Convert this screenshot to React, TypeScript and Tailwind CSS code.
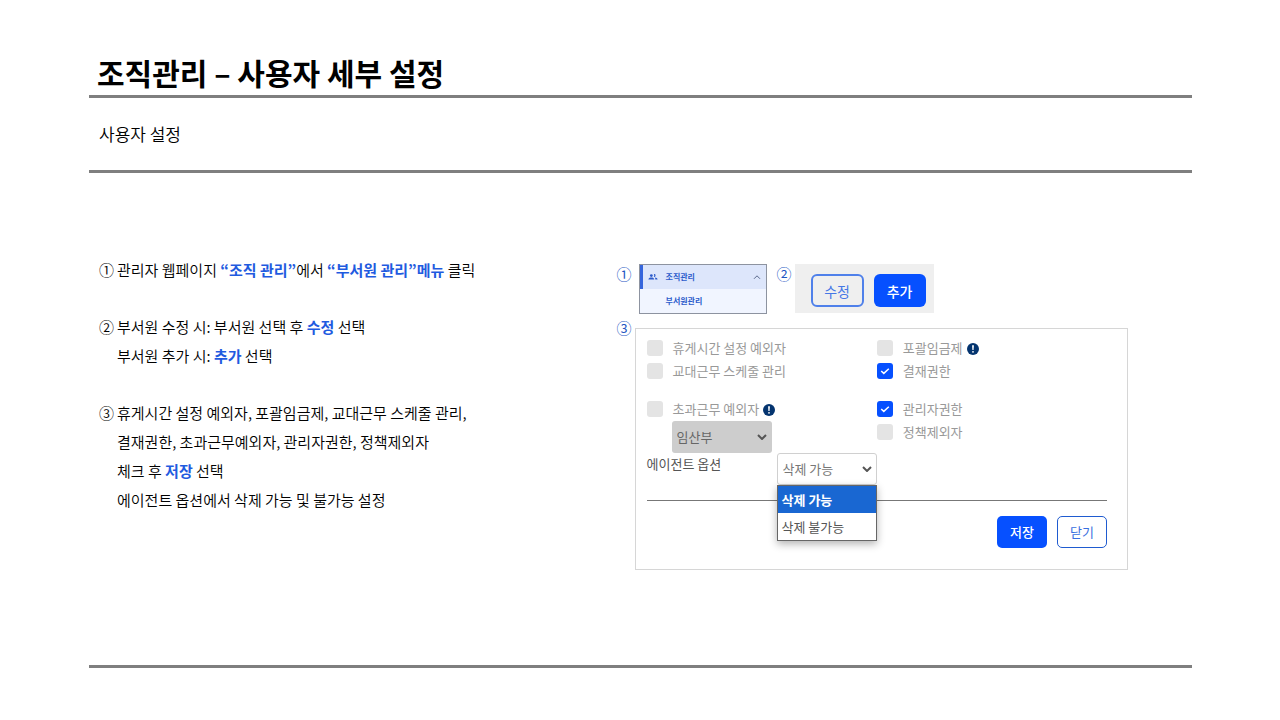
import React from "react";

function Key({ children }: { children: React.ReactNode }) {
  return <strong className="font-bold text-[#1f5be0]">{children}</strong>;
}

function Step({ mark, lines }: { mark: string; lines: React.ReactNode[] }) {
  return (
    <li className="flex">
      <span className="w-[18px] shrink-0">{mark}</span>
      <div>
        {lines.map((line, i) => (
          <p key={i}>{line}</p>
        ))}
      </div>
    </li>
  );
}

function Marker({ children }: { children: React.ReactNode }) {
  return <span className="w-[18px] shrink-0 text-[15px] leading-5 text-[#1f57c3]">{children}</span>;
}

function InfoIcon() {
  return (
    <svg viewBox="0 0 12 12" className="mt-0.5 ml-1 size-3 shrink-0" aria-hidden="true">
      <circle cx="6" cy="6" r="6" fill="#04346f" />
      <path d="M5.1 2.3h1.8L6.6 7H5.4z" fill="#fff" />
      <circle cx="6" cy="8.8" r="0.9" fill="#fff" />
    </svg>
  );
}

function Check({
  id,
  label,
  checked = false,
  info = false,
}: {
  id: string;
  label: string;
  checked?: boolean;
  info?: boolean;
}) {
  return (
    <div className="flex h-[23px] items-center">
      <span className="relative mr-2.5 size-4 shrink-0">
        <input
          id={id}
          type="checkbox"
          defaultChecked={checked}
          className="peer block size-4 appearance-none rounded-[3px] bg-[#e4e4e4] checked:bg-[#0650ff]"
        />
        <svg
          viewBox="0 0 16 16"
          className="pointer-events-none absolute inset-0 hidden peer-checked:block"
          aria-hidden="true"
        >
          <path d="M4.2 8l2.6 2.4 5-4.6" fill="none" stroke="#fff" strokeWidth="1.5" />
        </svg>
      </span>
      <label htmlFor={id} className="text-[13px] leading-5 text-[#999]">
        {label}
      </label>
      {info && <InfoIcon />}
    </div>
  );
}

function Chevron({ className }: { className: string }) {
  return (
    <svg viewBox="0 0 10 6" className={className} aria-hidden="true">
      <path d="M1 1l4 4 4-4" fill="none" stroke="currentColor" strokeWidth="2" />
    </svg>
  );
}

function MenuPreview() {
  return (
    <nav className="w-[128px] border border-[#8d93a0] bg-[#f1f5ff] text-[8px] font-bold text-[#2c5bcb]">
      <a href="#org" className="flex h-6 items-center border-l-[3px] border-[#3565dc] bg-[#dde6fb] pr-1">
        <svg viewBox="0 0 24 16" className="ml-[5px] h-2 w-2.5" fill="currentColor" aria-hidden="true">
          <circle cx="8" cy="4.5" r="3.3" />
          <path d="M1 14c0-3.5 3-5 7-5s7 1.5 7 5z" />
          <path d="M14 1.3a3.3 3.3 0 1 1 0 6.4c1.3-1.8 1.3-4.6 0-6.4z" />
          <path d="M16.5 9.2c3.8.3 6.5 1.8 6.5 4.8h-5.500c0-2-.2-3.500-1-4.800z" />
        </svg>
        <span className="ml-2 grow">조직관리</span>
        <svg viewBox="0 0 8 6" className="mr-px h-1.5 w-2" aria-hidden="true">
          <path d="M1 4.8l3-3 3 3" fill="none" stroke="#5b6a8c" strokeWidth="1" />
        </svg>
      </a>
      <a href="#members" className="flex h-6 items-center pl-[26px]">
        부서원관리
      </a>
    </nav>
  );
}

export default function App() {
  return (
    <div className="flex min-h-screen flex-col bg-white pr-[88px] pb-[52px] pl-[89px] font-['Noto_Sans_CJK_KR','Noto_Sans',sans-serif] text-black">
      <header>
        <h1 className="px-2 pt-[52px] pb-[3px] text-[30px] leading-10 font-bold">조직관리 – 사용자 세부 설정</h1>
        <hr className="border-t-[3px] border-[#7f7f7f]" />
        <p className="px-2.5 pt-6 pb-6 text-[17px] leading-6 font-[350]">사용자 설정</p>
        <hr className="border-t-[3px] border-[#7f7f7f]" />
      </header>

      <main className="grid grow grid-cols-[11fr_12fr] pt-[82px] pb-8">
        <ol className="flex flex-col gap-7 pl-2.5 text-[15px] leading-[29px] font-[350]">
          <Step
            mark="①"
            lines={[
              <>
                관리자 웹페이지 <Key>“조직 관리”</Key>에서 <Key>“부서원 관리”메뉴</Key> 클릭
              </>,
            ]}
          />
          <Step
            mark="②"
            lines={[
              <>
                부서원 수정 시: 부서원 선택 후 <Key>수정</Key> 선택
              </>,
              <>
                부서원 추가 시: <Key>추가</Key> 선택
              </>,
            ]}
          />
          <Step
            mark="③"
            lines={[
              "휴게시간 설정 예외자, 포괄임금제, 교대근무 스케줄 관리,",
              "결재권한, 초과근무예외자, 관리자권한, 정책제외자",
              <>
                체크 후 <Key>저장</Key> 선택
              </>,
              "에이전트 옵션에서 삭제 가능 및 불가능 설정",
            ]}
          />
        </ol>

        <section className="pt-[9px] pr-16">
          <div className="flex items-start">
            <Marker>①</Marker>
            <div className="mr-2.5 ml-1">
              <MenuPreview />
            </div>
            <Marker>②</Marker>
            <div className="flex gap-2.5 bg-[#efefef] pt-2.5 pr-2 pb-1.5 pl-4">
              <button className="h-[33px] w-[53px] rounded-md border-2 border-[#4f80ea] text-sm text-[#4577e6]">
                수정
              </button>
              <button className="h-[33px] w-[52px] rounded-md bg-[#0650ff] text-sm font-medium text-white">추가</button>
            </div>
          </div>

          <div className="mt-3.5 flex items-start">
            <div className="-mt-2.5 flex">
              <Marker>③</Marker>
            </div>
            <div className="grow border border-[#d6d6d6] pt-[7px] pr-5 pb-[21px] pl-[11px]">
              <div className="grid grid-cols-2">
                <Check id="break" label="휴게시간 설정 예외자" />
                <Check id="inclusive" label="포괄임금제" info />
                <Check id="shift" label="교대근무 스케줄 관리" />
                <Check id="approval" label="결재권한" checked />
              </div>
              <div className="mt-[15px] grid grid-cols-2">
                <div>
                  <Check id="overtime" label="초과근무 예외자" info />
                  <div className="relative ml-[25px] w-[100px] pt-px">
                    <select
                      aria-label="초과근무 예외자"
                      className="block h-8 w-full appearance-none rounded-[3px] bg-[#cdcdcd] px-[5px] text-[13px] text-[#666]"
                    >
                      <option>임산부</option>
                    </select>
                    <Chevron className="pointer-events-none absolute top-3.5 right-[5px] h-1.5 w-2.5 text-[#555]" />
                  </div>
                </div>
                <div>
                  <Check id="admin" label="관리자권한" checked />
                  <Check id="policy" label="정책제외자" />
                </div>
              </div>
              <div className="flex items-start">
                <label htmlFor="agent" className="w-[130px] text-[13px] leading-[22px] text-[#555]">
                  에이전트 옵션
                </label>
                <div className="relative w-[100px]">
                  <select
                    id="agent"
                    className="block h-8 w-full appearance-none rounded-[3px] border border-[#d0d0d0] bg-white px-[5px] text-[13px] text-[#777]"
                  >
                    <option>삭제 가능</option>
                    <option>삭제 불가능</option>
                  </select>
                  <Chevron className="pointer-events-none absolute top-[13px] right-[5px] h-1.5 w-2.5 text-[#555]" />
                  <ul
                    role="listbox"
                    aria-label="에이전트 옵션"
                    className="absolute top-full left-0 w-full border border-[#666] bg-white text-[13px] leading-[27px] text-[#555] shadow-[0_3px_8px_rgba(0,0,0,0.3)]"
                  >
                    <li role="option" aria-selected="true" className="bg-[#1967d2] px-1 font-bold text-white">
                      삭제 가능
                    </li>
                    <li role="option" aria-selected="false" className="px-1">
                      삭제 불가능
                    </li>
                  </ul>
                </div>
              </div>
              <hr className="mt-[15px] border-[#777]" />
              <div className="mt-[15px] flex justify-end gap-2.5">
                <button className="h-8 w-[50px] rounded-[5px] bg-[#0650ff] text-[13px] font-medium text-white">
                  저장
                </button>
                <button className="h-8 w-[50px] rounded-[5px] border border-[#1f5bd0] text-[13px] text-[#3a6fe0]">
                  닫기
                </button>
              </div>
            </div>
          </div>
        </section>
      </main>

      <footer>
        <hr className="border-t-[3px] border-[#7f7f7f]" />
      </footer>
    </div>
  );
}
